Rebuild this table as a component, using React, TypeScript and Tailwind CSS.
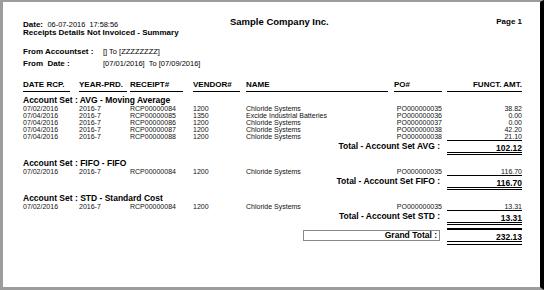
import React from 'react';

type Row = { date: string; prd: string; rcp: string; vendor: string; name: string; po: string; amt: string };

interface Section {
  code: string;
  title: string;
  rows: Row[];
  total: string;
}

const sections: Section[] = [
  {
    code: 'AVG',
    title: 'Account Set : AVG - Moving Average',
    total: '102.12',
    rows: [
      { date: '07/02/2016', prd: '2016-7', rcp: 'RCP00000084', vendor: '1200', name: 'Chloride Systems', po: 'PO000000035', amt: '38.82' },
      { date: '07/04/2016', prd: '2016-7', rcp: 'RCP00000085', vendor: '1350', name: 'Excide Industrial Batteries', po: 'PO000000036', amt: '0.00' },
      { date: '07/04/2016', prd: '2016-7', rcp: 'RCP00000086', vendor: '1200', name: 'Chloride Systems', po: 'PO000000037', amt: '0.00' },
      { date: '07/04/2016', prd: '2016-7', rcp: 'RCP00000087', vendor: '1200', name: 'Chloride Systems', po: 'PO000000038', amt: '42.20' },
      { date: '07/04/2016', prd: '2016-7', rcp: 'RCP00000088', vendor: '1200', name: 'Chloride Systems', po: 'PO000000038', amt: '21.10' },
    ],
  },
  {
    code: 'FIFO',
    title: 'Account Set : FIFO - FIFO',
    total: '116.70',
    rows: [
      { date: '07/02/2016', prd: '2016-7', rcp: 'RCP00000084', vendor: '1200', name: 'Chloride Systems', po: 'PO000000035', amt: '116.70' },
    ],
  },
  {
    code: 'STD',
    title: 'Account Set : STD - Standard Cost',
    total: '13.31',
    rows: [
      { date: '07/02/2016', prd: '2016-7', rcp: 'RCP00000084', vendor: '1200', name: 'Chloride Systems', po: 'PO000000035', amt: '13.31' },
    ],
  },
];

const headers = [
  { label: 'DATE RCP.', cls: 'w-[47px] mr-[9px]' },
  { label: 'YEAR-PRD.', cls: 'w-[48px] mr-[3px]' },
  { label: 'RECEIPT#', cls: 'w-[53px] mr-[10px]' },
  { label: 'VENDOR#', cls: 'w-[47px] mr-[6px]' },
  { label: 'NAME', cls: 'w-[142px] mr-[6px]' },
  { label: 'PO#', cls: 'w-[48px] mr-[5px]' },
  { label: 'FUNCT. AMT.', cls: 'w-[75px] text-right' },
];

function DataRow({ row }: { row: Row }) {
  return (
    <div className="flex h-[7px] leading-[7px] text-[7px] text-[#111]">
      <div className="w-[56px]">{row.date}</div>
      <div className="w-[51px]">{row.prd}</div>
      <div className="w-[63px]">{row.rcp}</div>
      <div className="w-[53px]">{row.vendor}</div>
      <div className="w-[148px] whitespace-nowrap">{row.name}</div>
      <div className="w-[48px] text-right">{row.po}</div>
      <div className="w-[5px]" />
      <div className="w-[75px] text-right">{row.amt}</div>
    </div>
  );
}

export default function App() {
  return (
    <div className="w-[544px] h-[290px] overflow-hidden bg-white border-t-2 border-l-[3px] border-b-[3px] border-r-4 border-t-[#9c9c9c] border-l-[#9c9c9c] border-b-[#9c9c9c] border-r-black text-black [font-family:'Liberation_Sans',Arial,sans-serif]">
      <div className="pl-[20px] pr-[18px] pt-[15px]">
        {/* report title block */}
        <div className="flex h-[10px] items-center">
          <div className="w-[207px] whitespace-nowrap">
            <span className="text-[8px] font-bold">Date:</span>{' '}
            <span className="text-[7.4px]">06-07-2016&nbsp;&nbsp;17:58:56</span>
          </div>
          <div className="text-[9.5px] font-bold">Sample Company Inc.</div>
          <div className="flex-1 text-right text-[8px] font-bold">Page 1</div>
        </div>
        <div className="h-[12px] flex items-end text-[8px] font-bold whitespace-nowrap">
          Receipts Details Not Invoiced - Summary
        </div>

        <div className="mt-[7px] flex h-[12px] items-center">
          <div className="w-[80px] text-[8px] font-bold">From Accountset :</div>
          <div className="text-[7.5px]">[] To [ZZZZZZZZ]</div>
        </div>
        <div className="flex h-[11px] items-center">
          <div className="w-[80px] text-[8px] font-bold">From&nbsp; Date :</div>
          <div className="text-[7.5px]">[07/01/2016]&nbsp; To [07/09/2016]</div>
        </div>

        {/* column headings */}
        <div className="mt-[11px] flex h-[12px]">
          {headers.map((h) => (
            <div key={h.label} className={`${h.cls} border-b border-black text-[8px] font-bold leading-[10px] whitespace-nowrap`}>
              {h.label}
            </div>
          ))}
        </div>

        <div className="mt-[3px]">
          {sections.map((s, i) => (
            <div key={s.code} className={i === 0 ? '' : 'mt-[3px]'}>
              <div className="h-[10px] leading-[10px] text-[8.5px] font-bold">{s.title}</div>
              {s.rows.map((r, j) => (
                <DataRow key={j} row={r} />
              ))}
              <div className="flex">
                <div className="w-[419px] pr-[2px] pt-[1px] text-right text-[8.5px] font-bold leading-[10px] whitespace-nowrap">
                  Total - Account Set {s.code} :
                </div>
                <div className="w-[5px]" />
                <div className="w-[75px] h-[15px] border-t border-b-[3px] border-double border-t-black border-b-black pt-[2px] text-right text-[8.5px] font-bold leading-[10px]">
                  {s.total}
                </div>
              </div>
            </div>
          ))}

          <div className="mt-[3px] flex">
            <div className="w-[280px]" />
            <div className="mt-[2px] h-[11px] w-[137px] border border-[#8a8a8a] pr-[2px] text-right text-[8.5px] font-bold leading-[9px]">
              Grand Total :
            </div>
            <div className="w-[7px]" />
            <div className="w-[75px] h-[17px] border-t-2 border-b-4 border-double border-t-black border-b-black pt-[2px] text-right text-[8.5px] font-bold leading-[10px]">
              232.13
            </div>
          </div>
        </div>
      </div>
    </div>
  );
}
